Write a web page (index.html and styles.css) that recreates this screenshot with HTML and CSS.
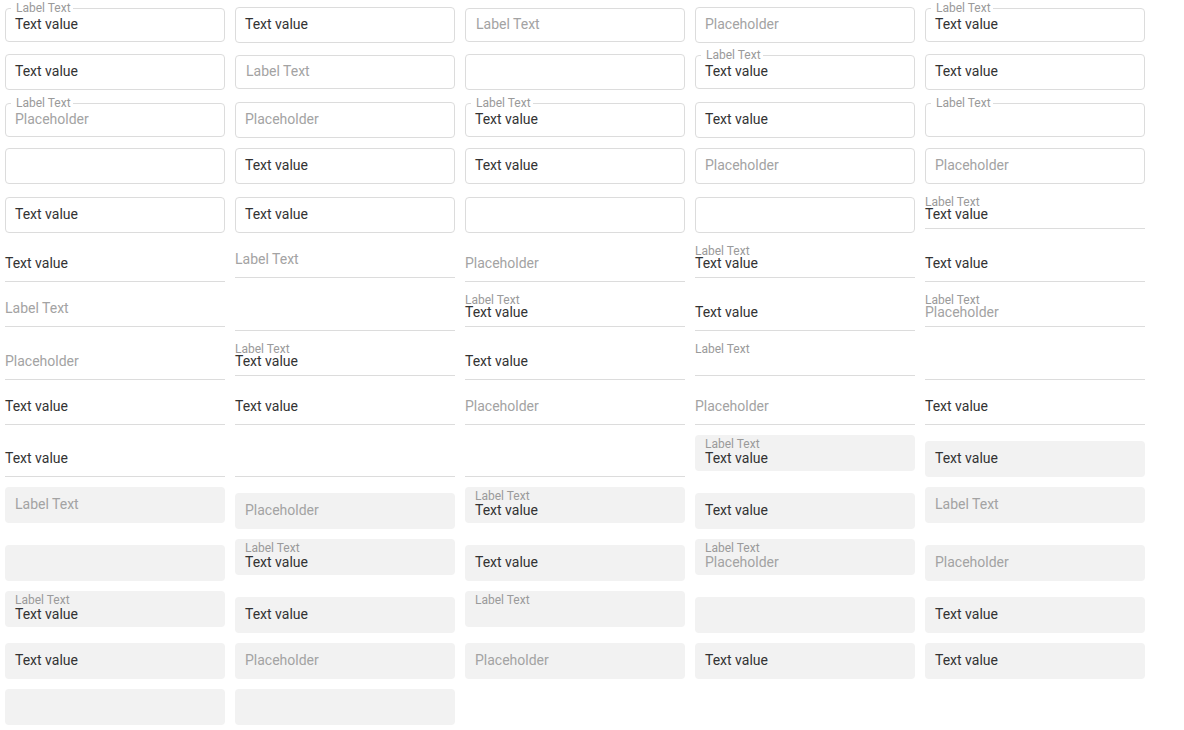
FILE: index.html
```html
<!DOCTYPE html>
<html lang="en">
<head>
<meta charset="utf-8">
<title>Text fields</title>
<link rel="stylesheet" href="styles.css">
</head>
<body>
<div class="grid">
  <!-- outlined -->
  <div class="field outlined labeled"><div class="box"><span class="label shrunk">Label Text</span><div class="text value">Text value</div></div></div>
  <div class="field outlined"><div class="box"><div class="text value">Text value</div></div></div>
  <div class="field outlined labeled"><div class="box"><span class="label rest">Label Text</span><div class="text">&nbsp;</div></div></div>
  <div class="field outlined"><div class="box"><div class="text ph">Placeholder</div></div></div>
  <div class="field outlined labeled"><div class="box"><span class="label shrunk">Label Text</span><div class="text value">Text value</div></div></div>

  <div class="field outlined"><div class="box"><div class="text value">Text value</div></div></div>
  <div class="field outlined labeled"><div class="box"><span class="label rest">Label Text</span><div class="text">&nbsp;</div></div></div>
  <div class="field outlined"><div class="box"><div class="text">&nbsp;</div></div></div>
  <div class="field outlined labeled"><div class="box"><span class="label shrunk">Label Text</span><div class="text value">Text value</div></div></div>
  <div class="field outlined"><div class="box"><div class="text value">Text value</div></div></div>

  <div class="field outlined labeled"><div class="box"><span class="label shrunk">Label Text</span><div class="text ph">Placeholder</div></div></div>
  <div class="field outlined"><div class="box"><div class="text ph">Placeholder</div></div></div>
  <div class="field outlined labeled"><div class="box"><span class="label shrunk">Label Text</span><div class="text value">Text value</div></div></div>
  <div class="field outlined"><div class="box"><div class="text value">Text value</div></div></div>
  <div class="field outlined labeled"><div class="box"><span class="label shrunk">Label Text</span><div class="text">&nbsp;</div></div></div>

  <div class="field outlined"><div class="box"><div class="text">&nbsp;</div></div></div>
  <div class="field outlined"><div class="box"><div class="text value">Text value</div></div></div>
  <div class="field outlined"><div class="box"><div class="text value">Text value</div></div></div>
  <div class="field outlined"><div class="box"><div class="text ph">Placeholder</div></div></div>
  <div class="field outlined"><div class="box"><div class="text ph">Placeholder</div></div></div>

  <div class="field outlined"><div class="box"><div class="text value">Text value</div></div></div>
  <div class="field outlined"><div class="box"><div class="text value">Text value</div></div></div>
  <div class="field outlined"><div class="box"><div class="text">&nbsp;</div></div></div>
  <div class="field outlined"><div class="box"><div class="text">&nbsp;</div></div></div>

  <!-- standard -->
  <div class="field standard labeled"><div class="box"><span class="label shrunk">Label Text</span><div class="text value">Text value</div></div></div>

  <div class="field standard"><div class="box"><div class="text value">Text value</div></div></div>
  <div class="field standard labeled"><div class="box"><span class="label rest">Label Text</span><div class="text">&nbsp;</div></div></div>
  <div class="field standard"><div class="box"><div class="text ph">Placeholder</div></div></div>
  <div class="field standard labeled"><div class="box"><span class="label shrunk">Label Text</span><div class="text value">Text value</div></div></div>
  <div class="field standard"><div class="box"><div class="text value">Text value</div></div></div>

  <div class="field standard labeled"><div class="box"><span class="label rest">Label Text</span><div class="text">&nbsp;</div></div></div>
  <div class="field standard"><div class="box"><div class="text">&nbsp;</div></div></div>
  <div class="field standard labeled"><div class="box"><span class="label shrunk">Label Text</span><div class="text value">Text value</div></div></div>
  <div class="field standard"><div class="box"><div class="text value">Text value</div></div></div>
  <div class="field standard labeled"><div class="box"><span class="label shrunk">Label Text</span><div class="text ph">Placeholder</div></div></div>

  <div class="field standard"><div class="box"><div class="text ph">Placeholder</div></div></div>
  <div class="field standard labeled"><div class="box"><span class="label shrunk">Label Text</span><div class="text value">Text value</div></div></div>
  <div class="field standard"><div class="box"><div class="text value">Text value</div></div></div>
  <div class="field standard labeled"><div class="box"><span class="label shrunk">Label Text</span><div class="text">&nbsp;</div></div></div>
  <div class="field standard"><div class="box"><div class="text">&nbsp;</div></div></div>

  <div class="field standard"><div class="box"><div class="text value">Text value</div></div></div>
  <div class="field standard"><div class="box"><div class="text value">Text value</div></div></div>
  <div class="field standard"><div class="box"><div class="text ph">Placeholder</div></div></div>
  <div class="field standard"><div class="box"><div class="text ph">Placeholder</div></div></div>
  <div class="field standard"><div class="box"><div class="text value">Text value</div></div></div>

  <div class="field standard"><div class="box"><div class="text value">Text value</div></div></div>
  <div class="field standard"><div class="box"><div class="text">&nbsp;</div></div></div>
  <div class="field standard"><div class="box"><div class="text">&nbsp;</div></div></div>

  <!-- filled -->
  <div class="field filled labeled"><div class="box"><span class="label shrunk">Label Text</span><div class="text value">Text value</div></div></div>
  <div class="field filled"><div class="box"><div class="text value">Text value</div></div></div>

  <div class="field filled labeled"><div class="box"><span class="label rest">Label Text</span><div class="text">&nbsp;</div></div></div>
  <div class="field filled"><div class="box"><div class="text ph">Placeholder</div></div></div>
  <div class="field filled labeled"><div class="box"><span class="label shrunk">Label Text</span><div class="text value">Text value</div></div></div>
  <div class="field filled"><div class="box"><div class="text value">Text value</div></div></div>
  <div class="field filled labeled"><div class="box"><span class="label rest">Label Text</span><div class="text">&nbsp;</div></div></div>

  <div class="field filled"><div class="box"><div class="text">&nbsp;</div></div></div>
  <div class="field filled labeled"><div class="box"><span class="label shrunk">Label Text</span><div class="text value">Text value</div></div></div>
  <div class="field filled"><div class="box"><div class="text value">Text value</div></div></div>
  <div class="field filled labeled"><div class="box"><span class="label shrunk">Label Text</span><div class="text ph">Placeholder</div></div></div>
  <div class="field filled"><div class="box"><div class="text ph">Placeholder</div></div></div>

  <div class="field filled labeled"><div class="box"><span class="label shrunk">Label Text</span><div class="text value">Text value</div></div></div>
  <div class="field filled"><div class="box"><div class="text value">Text value</div></div></div>
  <div class="field filled labeled"><div class="box"><span class="label shrunk">Label Text</span><div class="text">&nbsp;</div></div></div>
  <div class="field filled"><div class="box"><div class="text">&nbsp;</div></div></div>
  <div class="field filled"><div class="box"><div class="text value">Text value</div></div></div>

  <div class="field filled"><div class="box"><div class="text value">Text value</div></div></div>
  <div class="field filled"><div class="box"><div class="text ph">Placeholder</div></div></div>
  <div class="field filled"><div class="box"><div class="text ph">Placeholder</div></div></div>
  <div class="field filled"><div class="box"><div class="text value">Text value</div></div></div>
  <div class="field filled"><div class="box"><div class="text value">Text value</div></div></div>

  <div class="field filled"><div class="box"><div class="text">&nbsp;</div></div></div>
  <div class="field filled"><div class="box"><div class="text">&nbsp;</div></div></div>
</div>
</body>
</html>
```

FILE: styles.css
```css
html, body {
  margin: 0;
  padding: 0;
  background: #ffffff;
}

body {
  font-family: Roboto, "Liberation Sans", Arial, sans-serif;
  font-size: 14px;
  color: #333333;
}

.grid {
  display: flex;
  flex-wrap: wrap;
  align-items: baseline;
  width: 1184px;
}

.field {
  width: 220px;
  margin: 5px;
  box-sizing: border-box;
}

.box {
  position: relative;
  box-sizing: border-box;
}

.text {
  font-size: 14px;
  line-height: 20px;
  white-space: nowrap;
}

.value {
  color: #333333;
}

.ph {
  color: #a3a3a3;
}

.label {
  position: absolute;
  white-space: nowrap;
  color: #a3a3a3;
}

.label.shrunk {
  font-size: 12px;
  line-height: 12px;
  color: #9a9a9a;
}

.label.rest {
  font-size: 14px;
  line-height: 20px;
}

/* outlined */
.outlined .box {
  border: 1px solid #dcdcdc;
  border-radius: 4px;
  padding: 6px 9px 8px;
}

.outlined.labeled {
  margin-top: 7.5px;
}

.outlined.labeled .box {
  padding: 5px 9px 7px;
}

.outlined .label.shrunk {
  top: -7px;
  left: 5px;
  padding: 0 2px 0 5px;
  background: #ffffff;
}

.outlined .label.rest {
  top: 5px;
  left: 10px;
}

/* standard */
.standard .box {
  border-bottom: 1px solid #dcdcdc;
  padding: 6px 0 8px;
}

.standard.labeled .box {
  padding: 10px 0 4px;
}

.standard .label.shrunk {
  top: 2px;
  left: 0;
}

.standard .label.rest {
  top: 6px;
  left: 0;
}

/* filled */
.filled .box {
  background: #f2f2f2;
  border-radius: 4px;
  padding: 7px 10px 9px;
}

.filled.labeled .box {
  padding: 13px 10px 3px;
}

.filled .label.shrunk {
  top: 3px;
  left: 10px;
}

.filled .label.rest {
  top: 7px;
  left: 10px;
}
```
